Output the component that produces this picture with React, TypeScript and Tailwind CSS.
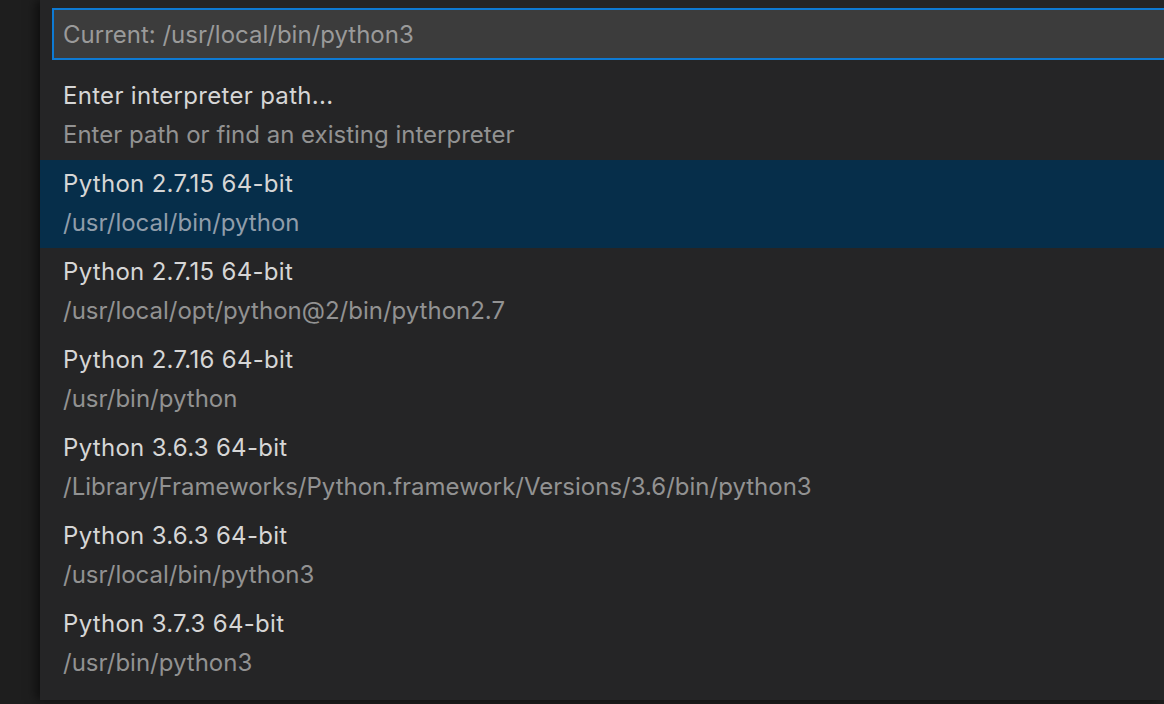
const items = [
  { label: 'Enter interpreter path...', detail: 'Enter path or find an existing interpreter' },
  { label: 'Python 2.7.15 64-bit', detail: '/usr/local/bin/python', selected: true },
  { label: 'Python 2.7.15 64-bit', detail: '/usr/local/opt/python@2/bin/python2.7' },
  { label: 'Python 2.7.16 64-bit', detail: '/usr/bin/python' },
  { label: 'Python 3.6.3 64-bit', detail: '/Library/Frameworks/Python.framework/Versions/3.6/bin/python3' },
  { label: 'Python 3.6.3 64-bit', detail: '/usr/local/bin/python3' },
  { label: 'Python 3.7.3 64-bit', detail: '/usr/bin/python3' },
];

export default function App() {
  return (
    <div
      className="w-[1164px] h-[704px] bg-[#1e1e1e] overflow-hidden flex"
      style={{ fontFamily: 'Inter, "Open Sans", sans-serif' }}
    >
      {/* quick pick panel */}
      <div className="ml-[40px] w-[1124px] h-[700px] bg-[#252526] shadow-[-4px_0_10px_rgba(0,0,0,0.55)] flex flex-col">
        <div className="mt-[8px] ml-[12px] -mr-[20px] h-[52px] bg-[#3c3c3c] border-2 border-[#0e7ad3] flex items-center pl-[9px] pt-[1px]">
          <span className="text-[24px] text-[#9a9a9a]">Current: /usr/local/bin/python3</span>
        </div>

        {/* list */}
        <div className="mt-[12px] flex flex-col">
          {items.map((it, i) => (
            <div
              key={i}
              className={
                'h-[88px] pt-[4px] pl-[23px] flex flex-col ' + (it.selected ? 'bg-[#062e4a]' : '')
              }
            >
              <div className="leading-[39px] text-[24px] text-[#d6d6d6] tracking-[0.3px]">{it.label}</div>
              <div
                className={
                  'leading-[39px] text-[24px] ' + (it.selected ? 'text-[#909daa]' : 'text-[#929292]')
                }
              >
                {it.detail}
              </div>
            </div>
          ))}
        </div>
      </div>
    </div>
  );
}
